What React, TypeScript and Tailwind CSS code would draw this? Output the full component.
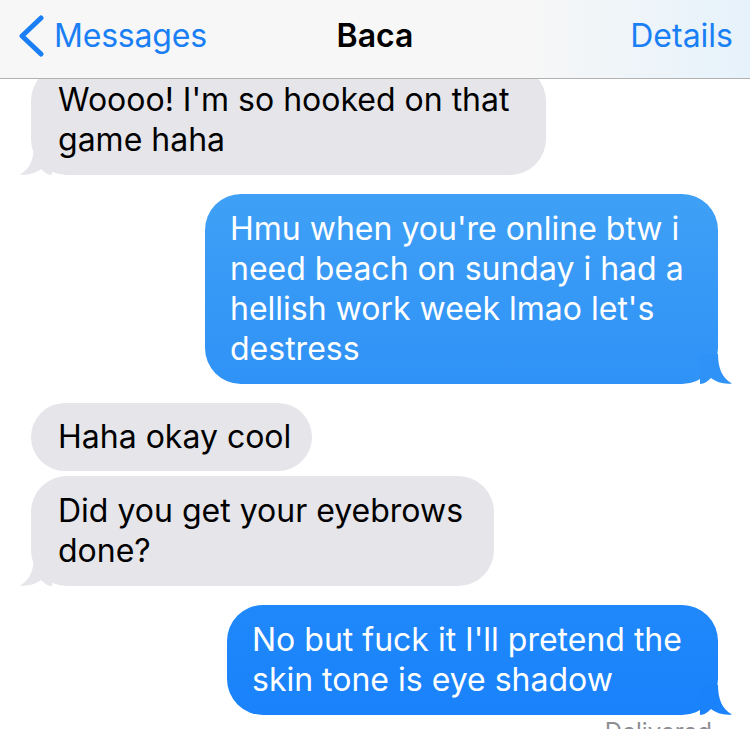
import React from "react";

type Side = "left" | "right";

function Tail({ side, color }: { side: Side; color: string }) {
  if (side === "right") {
    return (
      <svg
        className="absolute bottom-0 -right-[14px]"
        width="32"
        height="30"
        viewBox="0 0 32 30"
      >
        <path
          d="M0 0 H18 C18 14 22 24 32 29.5 C24 30.5 16 28 11 24 C8 27 4 30 0 30 Z"
          fill={color}
        />
      </svg>
    );
  }
  return (
    <svg
      className="absolute bottom-0 -left-[11px]"
      width="32"
      height="30"
      viewBox="0 0 32 30"
    >
      <path
        d="M32 0 H14 C14 14 10 24 0 29.5 C8 30.5 16 28 21 24 C24 27 28 30 32 30 Z"
        fill={color}
      />
    </svg>
  );
}

function Bubble({
  side,
  width,
  lines,
  tail,
  from,
  to,
}: {
  side: Side;
  width: string;
  lines: string[];
  tail?: boolean;
  from?: string;
  to?: string;
}) {
  const isRight = side === "right";
  const bottomColor = isRight ? to ?? "#1b84fb" : "#e5e5ea";
  const pad = lines.length > 1 ? "py-[15px]" : "py-[14px]";
  return (
    <div className={`flex ${isRight ? "justify-end pr-[32px]" : "justify-start pl-[31px]"}`}>
      <div
        className={`relative ${width} rounded-[36px] ${pad} ${
          isRight ? "pl-[25px] text-white" : "bg-[#e5e5ea] pl-[27px] text-black"
        }`}
        style={isRight ? { background: `linear-gradient(${from}, ${to})` } : undefined}
      >
        {tail && <Tail side={side} color={bottomColor} />}
        <div className="relative whitespace-nowrap text-[32px] leading-[40px] tracking-[0px]">
          {lines.map((l, i) => (
            <div key={i}>{l}</div>
          ))}
        </div>
      </div>
    </div>
  );
}

export default function App() {
  return (
    <div
      className="relative h-[729px] w-[750px] overflow-hidden bg-white"
      style={{ fontFamily: "Inter, 'Noto Sans', sans-serif" }}
    >
      {/* Nav bar */}
      <div className="relative z-10 flex h-[79px] items-center border-b border-[#b2b2b2] bg-[linear-gradient(90deg,#f7f7f7_0%,#f7f7f7_70%,#e6f2fb_100%)]">
        <div className="flex w-[250px] items-center pl-[17px] text-[#1a7ff5]">
          <svg width="28" height="42" viewBox="0 0 28 42" className="mt-[-6px]">
            <path d="M24 3 L5 21 L24 39" fill="none" stroke="#1a7ff5" strokeWidth="5" strokeLinecap="round" strokeLinejoin="round" />
          </svg>
          <span className="ml-[9px] mt-[-6px] text-[32px] tracking-[-0.2px]">Messages</span>
        </div>
        <div className="flex-1 text-center mt-[-6px] text-[32px] font-semibold text-black">Baca</div>
        <div className="w-[250px] pr-[17px] text-right mt-[-6px] text-[32px] text-[#1a7ff5]">Details</div>
      </div>

      {/* Thread */}
      <div className="-mt-[14px] flex flex-col">
        <Bubble side="left" width="w-[515px]" tail lines={["Woooo! I'm so hooked on that", "game haha"]} />
        <div className="h-[19px]" />
        <Bubble
          side="right"
          width="w-[513px]"
          tail
          from="#3fa0f6"
          to="#2f92f6"
          lines={["Hmu when you're online btw i", "need beach on sunday i had a", "hellish work week lmao let's", "destress"]}
        />
        <div className="h-[19px]" />
        <Bubble side="left" width="w-[281px]" lines={["Haha okay cool"]} />
        <div className="h-[5px]" />
        <Bubble side="left" width="w-[463px]" tail lines={["Did you get your eyebrows", "done?"]} />
        <div className="h-[19px]" />
        <Bubble
          side="right"
          width="w-[491px]"
          tail
          from="#1f88fa"
          to="#1a82fb"
          lines={["No but fuck it I'll pretend the", "skin tone is eye shadow"]}
        />
        <div className="mt-[1px] pr-[38px] text-right text-[24px] leading-[32px] text-[#8e8e93]">Delivered</div>
      </div>
    </div>
  );
}
